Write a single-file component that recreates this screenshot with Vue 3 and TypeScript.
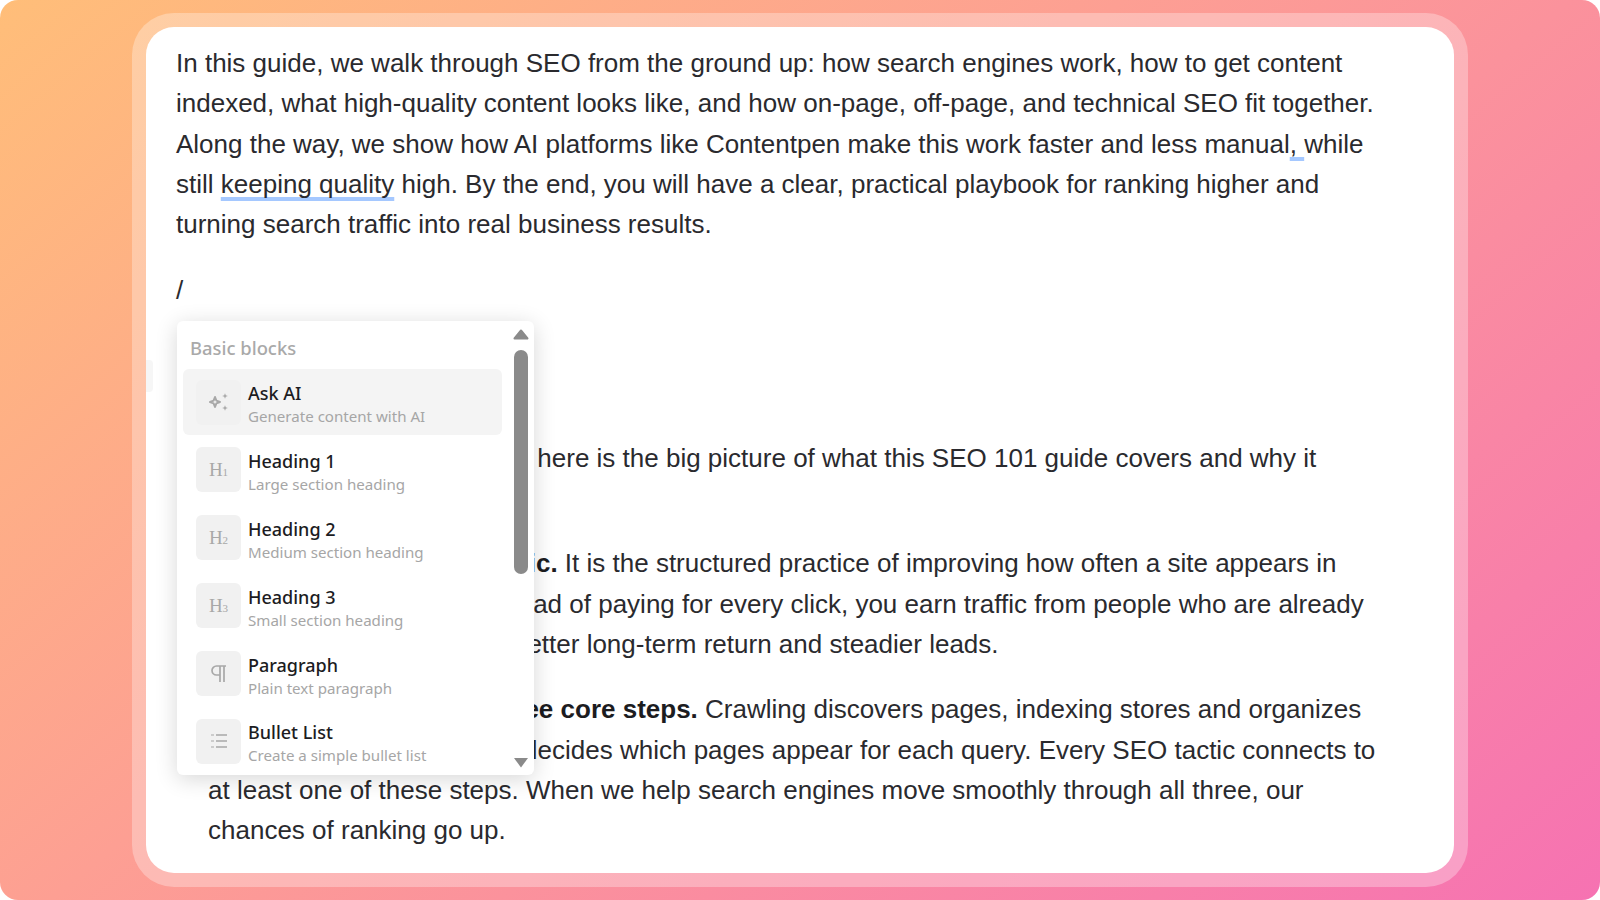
<script setup lang="ts">
type Block = { key: string; title: string; desc: string; icon: string; sub?: string; active?: boolean };

const blocks: Block[] = [
  { key: 'ai', title: 'Ask AI', desc: 'Generate content with AI', icon: 'spark', active: true },
  { key: 'h1', title: 'Heading 1', desc: 'Large section heading', icon: 'heading', sub: '1' },
  { key: 'h2', title: 'Heading 2', desc: 'Medium section heading', icon: 'heading', sub: '2' },
  { key: 'h3', title: 'Heading 3', desc: 'Small section heading', icon: 'heading', sub: '3' },
  { key: 'p', title: 'Paragraph', desc: 'Plain text paragraph', icon: 'para' },
  { key: 'ul', title: 'Bullet List', desc: 'Create a simple bullet list', icon: 'list' },
];
</script>

<template>
  <main class="stage">
    <div class="frame">
      <article class="card">
        <p class="intro">
          In this guide, we walk through SEO from the ground up: how search engines work, how to get content
          indexed, what high-quality content looks like, and how on-page, off-page, and technical SEO fit together.
          Along the way, we show how AI platforms like Contentpen make this work faster and less manual<span class="mark">, </span>while
          still <span class="mark">keeping quality</span> high. By the end, you will have a clear, practical playbook for ranking higher and
          turning search traffic into real business results.
        </p>
        <p class="slash">/</p>
        <p class="summary">
          Before we look into the details, here is the big picture of what this SEO 101 guide covers and why it
          matters.
        </p>
        <ul class="points">
          <li>
            <b>SEO is about organic traffic.</b> It is the structured practice of improving how often a site appears in
            organic search results. Instead of paying for every click, you earn traffic from people who are already
            searching for you, making better long-term return and steadier leads.
          </li>
          <li>
            <b>Search engines follow three core steps.</b> Crawling discovers pages, indexing stores and organizes
            page content, then ranking decides which pages appear for each query. Every SEO tactic connects to
            at least one of these steps. When we help search engines move smoothly through all three, our
            chances of ranking go up.
          </li>
        </ul>

        <span class="handle"></span>

        <aside class="menu">
          <div class="menu-list">
            <div class="menu-label">Basic blocks</div>
            <div
              v-for="block in blocks"
              :key="block.key"
              class="menu-item"
              :class="{ active: block.active }"
            >
              <span class="menu-icon">
                <svg v-if="block.icon === 'spark'" viewBox="0 0 24 24" width="24" height="24" fill="currentColor">
                  <path d="M8 7 9.4 10.6 13 12 9.4 13.4 8 17 6.6 13.4 3 12 6.6 10.6Z" fill="none" stroke="currentColor" stroke-width="2" stroke-linejoin="round"/>
                  <path d="M18 3.2 18.8 5.2 20.8 6 18.8 6.8 18 8.8 17.2 6.8 15.2 6 17.2 5.2Z"/>
                  <path d="M18 15.2 18.8 17.2 20.8 18 18.8 18.8 18 20.8 17.2 18.8 15.2 18 17.2 17.2Z"/>
                </svg>
                <span v-else-if="block.icon === 'heading'" class="glyph">H<sub>{{ block.sub }}</sub></span>
                <svg v-else-if="block.icon === 'para'" viewBox="0 0 24 24" width="24" height="24" fill="none" stroke="currentColor" stroke-width="1.7">
                  <path d="M13 4v16M17 4v16M19 4H9.5a4.5 4.5 0 0 0 0 9H13"/>
                </svg>
                <svg v-else viewBox="0 0 24 24" width="24" height="24" fill="none" stroke="currentColor" stroke-width="1.5">
                  <path d="M9 6h11M9 12h11M9 18h11"/>
                  <path d="M4 6h3M4 12h3M4 18h3" stroke-width="1.2"/>
                </svg>
              </span>
              <span class="menu-text">
                <span class="menu-title">{{ block.title }}</span>
                <span class="menu-desc">{{ block.desc }}</span>
              </span>
            </div>
          </div>
          <div class="scroll">
            <svg class="arrow" viewBox="0 0 16 11" width="16" height="11"><path d="M8 1.5 14.5 9.5H1.5Z" fill="#8a8a8a" stroke="#8a8a8a" stroke-width="2" stroke-linejoin="round"/></svg>
            <span class="thumb"></span>
            <svg class="arrow down" viewBox="0 0 16 11" width="16" height="11"><path d="M1 1H15L8 10.5Z" fill="#8a8a8a"/></svg>
          </div>
        </aside>
      </article>
    </div>
  </main>
</template>

<style scoped>
.stage {
  width: 1600px;
  height: 900px;
  box-sizing: border-box;
  display: flex;
  align-items: center;
  justify-content: center;
  border-radius: 18px;
  background: linear-gradient(140deg, #ffbe79 0%, #fd9f93 42%, #f672b2 100%);
  overflow: hidden;
}

.frame {
  width: 1336px;
  height: 874px;
  box-sizing: border-box;
  padding: 14px;
  border-radius: 42px;
  background: rgba(255, 255, 255, 0.3);
}

.card {
  position: relative;
  height: 100%;
  box-sizing: border-box;
  padding: 16px 60px 0 30px;
  border-radius: 28px;
  background: #fff;
  overflow: hidden;
  font-family: "Liberation Sans", Arial, sans-serif;
  font-size: 26px;
  line-height: 40.3px;
  color: #2a2a2e;
}

p {
  margin: 0;
}

.mark {
  text-decoration: underline;
  text-decoration-color: #a5c8ff;
  text-decoration-thickness: 4px;
  text-underline-offset: 4px;
  text-decoration-skip-ink: none;
}

.slash {
  margin-top: 26px;
}

.summary {
  margin-top: 127px;
}

.points {
  margin: 25px 0 0;
  padding: 0 0 0 32px;
}

.points li + li {
  margin-top: 25px;
}

.points b {
  font-weight: 700;
  color: #1c1c1f;
}

.handle {
  position: absolute;
  left: 0;
  top: 333px;
  width: 7px;
  height: 32px;
  border-radius: 0 4px 4px 0;
  background: #f6f6f6;
}

.menu {
  position: absolute;
  left: 31px;
  top: 294px;
  width: 357px;
  height: 454px;
  display: flex;
  border-radius: 6px;
  background: #fff;
  box-shadow: 0 4px 22px rgba(0, 0, 0, 0.16);
  overflow: hidden;
  font-family: "Noto Sans", "Open Sans", sans-serif;
}

.menu-list {
  flex: 1;
  min-width: 0;
  padding: 13px 8px 0 6px;
  overflow: hidden;
}

.menu-label {
  padding-left: 7px;
  margin-bottom: 8px;
  font-size: 18.4px;
  line-height: 27px;
  font-weight: 500;
  color: #a9a9a9;
}

.menu-item {
  display: flex;
  align-items: center;
  gap: 7px;
  height: 66px;
  margin-bottom: 1.9px;
  padding-left: 13px;
  border-radius: 6px;
}

.menu-item.active {
  background: #f4f4f4;
}

.menu-icon {
  flex: none;
  width: 45px;
  height: 45px;
  display: flex;
  align-items: center;
  justify-content: center;
  border-radius: 6px;
  background: #f1f1f1;
  color: #a8a8a8;
}

.glyph {
  font-family: "Liberation Serif", serif;
  font-size: 19px;
  line-height: 1;
}

.glyph sub {
  font-size: 11px;
  vertical-align: baseline;
}

.menu-text {
  display: flex;
  flex-direction: column;
  min-width: 0;
  padding-top: 4px;
}

.menu-title {
  font-size: 18px;
  line-height: 24px;
  font-weight: 500;
  color: #1c1c22;
}

.menu-desc {
  font-size: 15.1px;
  line-height: 22px;
  color: #a6a6a6;
}

.scroll {
  flex: none;
  width: 24px;
  display: flex;
  flex-direction: column;
  align-items: center;
  padding: 8px 2px 7px 0;
  box-sizing: border-box;
}

.arrow {
  flex: none;
}

.arrow.down {
  margin-top: auto;
}

.thumb {
  width: 14px;
  height: 224px;
  margin-top: 10px;
  border-radius: 7px;
  background: #8a8a8a;
}
</style>

<style>
body {
  background: #fff;
}
</style>
